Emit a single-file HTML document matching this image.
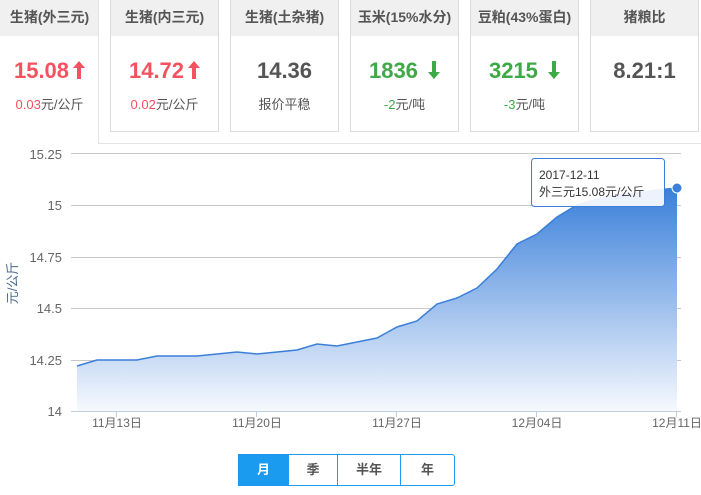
<!DOCTYPE html>
<html><head><meta charset="utf-8"><style>
body{margin:0;width:701px;height:495px;background:#fff;font-family:"Liberation Sans","Noto Sans CJK SC",sans-serif;position:relative;overflow:hidden}
.outer{position:absolute;left:98px;top:-2px;width:610px;height:144px;border:1px solid #e3e3e3}
.card{position:absolute;top:-1px;width:107px;height:131px;border:1px solid #dcdcdc;background:#fff;text-align:center}
.card .h{height:36px;background:#f0f0f0;line-height:34px;font-size:14px;font-weight:bold;color:#555}
.card .v{font-size:22px;font-weight:bold;margin-top:22px;height:26px;line-height:26px}
.card .v svg{vertical-align:-1px;margin-left:4px}
.card .s{font-size:13px;color:#555;margin-top:10px}
.r{color:#f5515f}.g{color:#3daa47}.d{color:#555}
.btns{position:absolute;left:238px;top:454px;height:30px;border:1px solid #1a9bf0;display:flex;border-radius:0 3px 3px 0}
.btns div{height:30px;line-height:30px;text-align:center;font-size:13px;font-weight:bold;color:#555;border-left:1px solid #1a9bf0}
</style></head><body>
<div class="outer"></div>
<div class="card" style="left:-10px;border-color:transparent;width:107px;border-right:none"><div class="h" style="padding-left:10px">生猪(外三元)</div><div class="v r" style="padding-left:10px">15.08<svg width="12" height="18" viewBox="0 0 12 18"><path d="M6 0L12 7H8V18H4V7H0Z" fill="#f5515f"/></svg></div><div class="s" style="padding-left:10px"><span class="r">0.03</span>元/公斤</div></div>
<div class="card" style="left:110px"><div class="h">生猪(内三元)</div><div class="v r">14.72<svg width="12" height="18" viewBox="0 0 12 18"><path d="M6 0L12 7H8V18H4V7H0Z" fill="#f5515f"/></svg></div><div class="s"><span class="r">0.02</span>元/公斤</div></div>
<div class="card" style="left:230px"><div class="h">生猪(土杂猪)</div><div class="v d">14.36</div><div class="s">报价平稳</div></div>
<div class="card" style="left:350px"><div class="h">玉米(15%水分)</div><div class="v g">1836 <svg width="12" height="18" viewBox="0 0 12 18"><path d="M6 18L12 11H8V0H4V11H0Z" fill="#3daa47"/></svg></div><div class="s"><span class="g">-2</span>元/吨</div></div>
<div class="card" style="left:470px"><div class="h">豆粕(43%蛋白)</div><div class="v g">3215 <svg width="12" height="18" viewBox="0 0 12 18"><path d="M6 18L12 11H8V0H4V11H0Z" fill="#3daa47"/></svg></div><div class="s"><span class="g">-3</span>元/吨</div></div>
<div class="card" style="left:590px"><div class="h">猪粮比</div><div class="v d">8.21:1</div></div>
<svg style="position:absolute;left:0;top:0" width="701" height="495">
<defs><linearGradient id="gr" x1="0" y1="188" x2="0" y2="411" gradientUnits="userSpaceOnUse"><stop offset="0" stop-color="#3a7fd9"/><stop offset="1" stop-color="#f6f9fe"/></linearGradient></defs>
<g stroke="#c8c8c8" stroke-width="1">
<line x1="71" y1="153.5" x2="681" y2="153.5"/><line x1="71" y1="205.5" x2="681" y2="205.5"/><line x1="71" y1="257.5" x2="681" y2="257.5"/><line x1="71" y1="308.5" x2="681" y2="308.5"/><line x1="71" y1="360.5" x2="681" y2="360.5"/></g>
<polygon fill="url(#gr)" points="77,366 97,360 117,360 137,360 157,356 177,356 197,356 217,354 237,352 257,354 277,352 297,350 317,344 337,346 357,342 377,338 397,327 417,321 437,304 457,298 477,288 497,269 517,244 537,234 557,217 577,205 597,199 617,195 637,193 657,190 677,188 677,411 77,411"/>
<polyline fill="none" stroke="#3a7fd9" stroke-width="1.5" points="77,366 97,360 117,360 137,360 157,356 177,356 197,356 217,354 237,352 257,354 277,352 297,350 317,344 337,346 357,342 377,338 397,327 417,321 437,304 457,298 477,288 497,269 517,244 537,234 557,217 577,205 597,199 617,195 637,193 657,190 677,188"/>
<line x1="71" y1="411.5" x2="681" y2="411.5" stroke="#c0cfe0"/>
<g stroke="#c0cfe0"><line x1="116.5" y1="411" x2="116.5" y2="417"/><line x1="256.5" y1="411" x2="256.5" y2="417"/><line x1="396.5" y1="411" x2="396.5" y2="417"/><line x1="536.5" y1="411" x2="536.5" y2="417"/><line x1="676.5" y1="411" x2="676.5" y2="417"/></g>
<g font-size="13" fill="#666" text-anchor="end" font-family="Liberation Sans,sans-serif">
<text x="62" y="159">15.25</text><text x="62" y="210">15</text><text x="62" y="262">14.75</text><text x="62" y="313">14.5</text><text x="62" y="365">14.25</text><text x="62" y="416">14</text></g>
<g font-size="12" fill="#666" text-anchor="middle" font-family="Liberation Sans,Noto Sans CJK SC,sans-serif">
<text x="117" y="427">11月13日</text><text x="257" y="427">11月20日</text><text x="397" y="427">11月27日</text><text x="537" y="427">12月04日</text><text x="677" y="427">12月11日</text></g>
<text transform="translate(17,283) rotate(-90)" text-anchor="middle" font-size="13" fill="#4a6a8a" font-family="Liberation Sans,Noto Sans CJK SC,sans-serif">元/公斤</text>
<rect x="531.5" y="158.5" width="133" height="48" rx="3" fill="#fff" fill-opacity="0.9" stroke="#3a7fd9"/>
<text x="539" y="179" font-size="12" fill="#333" font-family="Liberation Sans,Noto Sans CJK SC,sans-serif">2017-12-11</text>
<text x="539" y="196" font-size="12" fill="#333" font-family="Liberation Sans,Noto Sans CJK SC,sans-serif">外三元15.08元/公斤</text>
<circle cx="677" cy="188" r="5" fill="#3a7fd9" stroke="#fff" stroke-width="1"/>
</svg>
<div class="btns"><div style="width:49px;background:#1a9bf0;color:#fff;border-left:none">月</div><div style="width:48px">季</div><div style="width:62px">半年</div><div style="width:53px">年</div></div>
</body></html>
